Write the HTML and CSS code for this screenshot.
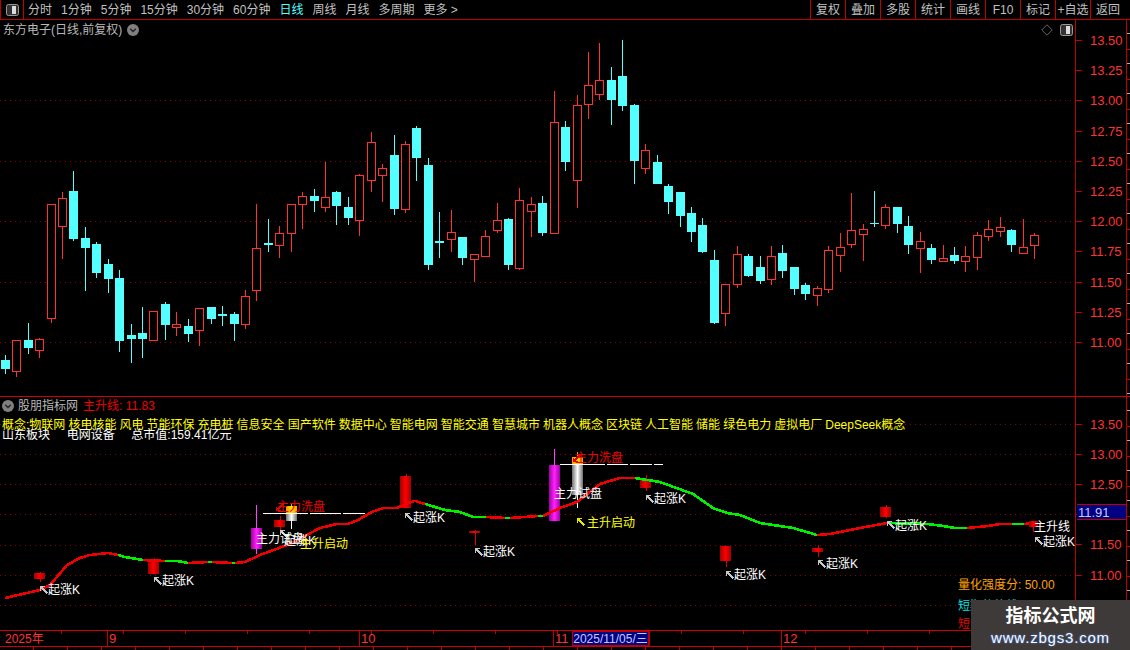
FILE: index.html
```html
<!DOCTYPE html>
<html lang="zh-CN">
<head>
<meta charset="utf-8">
<title>东方电子 日线</title>
<link rel="stylesheet" href="styles.css">
</head>
<body>
<div class="app">
  <svg class="defs" width="0" height="0" aria-hidden="true">
    <defs>
      <g id="ar"><path d="M0.5 0.5l7 7M0.5 0.5h4M0.5 0.5v4" fill="none" stroke-width="1.5"/></g>
      <linearGradient id="gr"><stop offset="0" stop-color="#a00000"/><stop offset=".5" stop-color="#ff0000"/><stop offset="1" stop-color="#a00000"/></linearGradient>
      <linearGradient id="gm"><stop offset="0" stop-color="#a000a0"/><stop offset=".5" stop-color="#ff20ff"/><stop offset="1" stop-color="#a000a0"/></linearGradient>
      <linearGradient id="gw"><stop offset="0" stop-color="#707070"/><stop offset=".5" stop-color="#ffffff"/><stop offset="1" stop-color="#707070"/></linearGradient>
      <linearGradient id="go"><stop offset="0" stop-color="#ff9800"/><stop offset=".5" stop-color="#ffe000"/><stop offset="1" stop-color="#ff9800"/></linearGradient>
    </defs>
  </svg>

  <header class="toolbar">
    <div class="tb-toggle">
      <svg width="13" height="12" viewBox="0 0 13 12"><rect x=".5" y=".5" width="12" height="11" rx="2" fill="#333" stroke="#999"/><rect x="6" y="2" width="4" height="8" fill="#ddd"/></svg>
    </div>
    <nav class="tb-periods">
      <span>分时</span><span>1分钟</span><span>5分钟</span><span>15分钟</span><span>30分钟</span><span>60分钟</span><span class="active">日线</span><span>周线</span><span>月线</span><span>多周期</span><span>更多 &gt;</span>
    </nav>
    <nav class="tb-actions">
      <span>复权</span><span>叠加</span><span>多股</span><span>统计</span><span>画线</span><span>F10</span><span>标记</span><span>+自选</span><span>返回</span>
    </nav>
  </header>

  <section class="panel panel-main">
    <div class="plot">
      <svg class="canvas" width="1075" height="376" viewBox="0 20 1075 376">
        <path class="grid" d="M0 100.5H1075M0 161.5H1075M0 221.5H1075M0 282.5H1075M0 342.5H1075"/>
        <path class="wick-c" d="M5.5 355V374M28.5 323V354M73.5 171V241M85.5 227V291M96.5 242V278M108.5 259V293M119.5 270V352M131.5 324V363M142.5 307V358M165.5 302V340M188.5 319V342M211.5 307V324M222.5 306V326M234.5 312V341M268.5 219V252M314.5 189V212M336.5 191V225M348.5 197V225M394.5 135V215M416.5 126V181M428.5 158V270M439.5 212V258M462.5 237V265M508.5 218V270M542.5 196V236M565.5 121V171M611.5 67V125M622.5 40V111M634.5 104V184M657.5 155V184M668.5 184V214M680.5 192V227M691.5 207V242M702.5 218V253M714.5 250V324M748.5 254V277M760.5 256V284M782.5 245V278M794.5 267V295M805.5 283V300M874.5 191V227M897.5 207V233M908.5 216V254M931.5 244V264M954.5 247V264M1011.5 229V252"/>
        <path class="body-c" d="M1 360h9v9h-9zM24 340h9v8h-9zM69 191h9v48h-9zM81 238h9v10h-9zM92 244h9v29h-9zM104 264h9v15h-9zM115 278h9v63h-9zM127 335h9v4h-9zM138 333h9v6h-9zM161 304h9v21h-9zM184 326h9v8h-9zM207 307h9v12h-9zM218 314h9v2h-9zM230 314h9v10h-9zM264 243h9v2h-9zM310 196h9v5h-9zM332 192h9v14h-9zM344 207h9v11h-9zM390 155h9v54h-9zM412 128h9v30h-9zM424 165h9v100h-9zM435 241h9v2h-9zM458 237h9v21h-9zM504 219h9v46h-9zM538 203h9v30h-9zM561 127h9v35h-9zM607 80h9v20h-9zM618 76h9v30h-9zM630 105h9v56h-9zM653 162h9v22h-9zM664 186h9v16h-9zM676 192h9v24h-9zM687 213h9v19h-9zM698 225h9v27h-9zM710 260h9v63h-9zM744 256h9v20h-9zM756 267h9v14h-9zM778 253h9v18h-9zM790 267h9v22h-9zM801 285h9v9h-9zM870 223h9v1h-9zM893 207h9v17h-9zM904 226h9v19h-9zM927 248h9v12h-9zM950 255h9v6h-9zM1007 230h9v15h-9z"/>
        <path class="wick-r" d="M16.5 371V377M39.5 338V339M39.5 350V358M51.5 318V323M62.5 192V198M62.5 226V259M176.5 312V324M176.5 327V336M199.5 330V346M245.5 290V296M245.5 324V329M256.5 204V248M256.5 290V301M279.5 226V233M279.5 245V258M291.5 233V252M302.5 192V196M302.5 204V229M325.5 162V197M325.5 207V212M359.5 174V175M359.5 220V236M371.5 132V142M371.5 180V192M382.5 164V168M382.5 175V202M405.5 141V144M405.5 209V213M451.5 210V232M451.5 239V252M474.5 259V282M485.5 230V236M497.5 203V220M497.5 230V233M519.5 188V200M519.5 268V270M531.5 197V204M531.5 211V237M554.5 91V122M577.5 95V105M577.5 180V208M588.5 52V85M588.5 104V119M599.5 43V80M599.5 94V100M645.5 144V150M645.5 168V174M725.5 313V326M737.5 246V254M737.5 284V288M771.5 246V256M771.5 279V285M817.5 286V288M817.5 295V306M828.5 246V250M828.5 289V293M840.5 233V247M840.5 255V272M851.5 193V230M851.5 244V248M863.5 224V229M863.5 234V261M885.5 204V207M885.5 225V229M920.5 232V241M920.5 248V273M943.5 245V258M965.5 246V256M965.5 261V272M977.5 232V235M977.5 257V270M988.5 220V229M988.5 236V241M1000.5 217V227M1000.5 231V237M1023.5 219V247M1034.5 233V235M1034.5 245V259"/>
        <path class="body-r" d="M12.5 340.5h8V371.5h-8zM35.5 339.5h8V350.5h-8zM47.5 204.5h8V318.5h-8zM58.5 198.5h8V226.5h-8zM149.5 311.5h8V340.5h-8zM172.5 324.5h8V327.5h-8zM195.5 308.5h8V330.5h-8zM241.5 296.5h8V324.5h-8zM252.5 248.5h8V290.5h-8zM275.5 233.5h8V245.5h-8zM287.5 204.5h8V233.5h-8zM298.5 196.5h8V204.5h-8zM321.5 197.5h8V207.5h-8zM355.5 175.5h8V220.5h-8zM367.5 142.5h8V180.5h-8zM378.5 168.5h8V175.5h-8zM401.5 144.5h8V209.5h-8zM447.5 232.5h8V239.5h-8zM470.5 254.5h8V259.5h-8zM481.5 236.5h8V256.5h-8zM493.5 220.5h8V230.5h-8zM515.5 200.5h8V268.5h-8zM527.5 204.5h8V211.5h-8zM550.5 122.5h8V233.5h-8zM573.5 105.5h8V180.5h-8zM584.5 85.5h8V104.5h-8zM595.5 80.5h8V94.5h-8zM641.5 150.5h8V168.5h-8zM721.5 284.5h8V313.5h-8zM733.5 254.5h8V284.5h-8zM767.5 256.5h8V279.5h-8zM813.5 288.5h8V295.5h-8zM824.5 250.5h8V289.5h-8zM836.5 247.5h8V255.5h-8zM847.5 230.5h8V244.5h-8zM859.5 229.5h8V234.5h-8zM881.5 207.5h8V225.5h-8zM916.5 241.5h8V248.5h-8zM939.5 258.5h8V261.5h-8zM961.5 256.5h8V261.5h-8zM973.5 235.5h8V257.5h-8zM984.5 229.5h8V236.5h-8zM996.5 227.5h8V231.5h-8zM1019.5 247.5h8V253.5h-8zM1030.5 235.5h8V245.5h-8z"/>
      </svg>
      <div class="chart-title">
        <span>东方电子(日线,前复权)</span>
        <svg width="12" height="12" viewBox="0 0 12 12"><circle cx="6" cy="6" r="6" fill="#808080"/><path d="M3.2 4.8L6 7.6l2.8-2.8" fill="none" stroke="#222" stroke-width="1.4"/></svg>
      </div>
      <div class="chart-tools">
        <svg width="12" height="12" viewBox="0 0 12 12"><path d="M6 .8L11.2 6 6 11.2.8 6z" fill="none" stroke="#666"/></svg>
        <svg width="13" height="12" viewBox="0 0 13 12"><rect x=".5" y=".5" width="12" height="11" rx="2" fill="#333" stroke="#999"/><rect x="6" y="2" width="4" height="8" fill="#ddd"/></svg>
      </div>
    </div>
    <aside class="axis axis-main">
      <div class="scale">
        <div class="tick">13.50</div><div class="tick">13.25</div><div class="tick">13.00</div><div class="tick">12.75</div><div class="tick">12.50</div><div class="tick">12.25</div><div class="tick">12.00</div><div class="tick">11.75</div><div class="tick">11.50</div><div class="tick">11.25</div><div class="tick">11.00</div>
      </div>
      <div class="minor"></div>
    </aside>
  </section>

  <section class="panel panel-sub">
    <div class="plot">
      <svg class="canvas" width="1075" height="233" viewBox="0 397 1075 233">
        <path class="grid" d="M0 424.5H1075M0 454.5H1075M0 484.5H1075M0 514.5H1075M0 545.5H1075M0 575.5H1075M0 605.5H1075"/>

        <path class="wick-s" d="M40 572V582M154 558V560M280 516V532M406 474V478M475 530V545M646 475V491M726 561V567M818 545V557M886 505V518M1033 521V532"/>
        <rect class="fill-r" x="34" y="573" width="11" height="6"/>
        <rect class="fill-r" x="148" y="559" width="11" height="15"/>
        <rect class="fill-r" x="274" y="520" width="11" height="7"/>
        <rect class="fill-r" x="400" y="476" width="11" height="32"/>
        <rect class="fill-r" x="469" y="531" width="11" height="2"/>
        <rect class="fill-r" x="640" y="479" width="11" height="9"/>
        <rect class="fill-r" x="720" y="546" width="11" height="15"/>
        <rect class="fill-r" x="812" y="548" width="11" height="4"/>
        <rect class="fill-r" x="880" y="507" width="11" height="10"/>

        <path class="wick-m" d="M256.500 505V554M554.500 449V521"/>
        <rect class="fill-m" x="251" y="528" width="11" height="21"/>
        <rect class="fill-m" x="549" y="465" width="11" height="56"/>

        <path class="wick-w" d="M291.500 521V529M577.500 495V508"/>
        <path class="wick-o" d="M291.500 503V506M577.500 452V457"/>
        <rect class="fill-w" x="286" y="513" width="11" height="8"/>
        <rect class="fill-o" x="286" y="506" width="11" height="7"/>
        <rect class="fill-w" x="572" y="464" width="11" height="31"/>
        <rect class="fill-o" x="572" y="457" width="11" height="7"/>

        <path class="dash" d="M263 513.500H308M310 513.500H341M343 513.500H365M560 464.500H605M607 464.500H628M630 464.500H652M654 464.500H663"/>

        <path class="line-r" d="M5 598L40 590 50 585 62 571 67 565 80 558 90 555 108 553 118 555M143 560L165 561M188 563L208 562M212 562L232 563M235 563L245 562 260 555 290 544 320 528 337 524 348 524 358 520 372 512 383 508 397 508 408 503 415 501 425 504M486 517L505 518M510 518L538 516M543 516L560 508 577 502 600 484 620 478 635 478M817 535L830 534 860 528 887 523M967 528L988 526 1000 524 1012 524M1024 524L1033 523"/>
        <path class="line-g" d="M118 555L125 557 143 560M165 561L177 561 188 563M208 562L212 562M232 563L235 563M425 504L445 510 460 512 473 517 486 517M505 518L510 518M538 516L543 516M635 478L660 482 693 494 713 508 727 513 740 515 760 523 793 528 817 535M887 523L927 524 943 526 955 528 967 528M1012 524L1024 524"/>
        <rect class="fill-r" x="1029" y="521" width="9" height="6"/>

        <use href="#ar" class="ar-w" x="40" y="586"/>
        <use href="#ar" class="ar-w" x="154" y="577"/>
        <use href="#ar" class="ar-w" x="280" y="530"/>
        <use href="#ar" class="ar-w" x="405" y="513"/>
        <use href="#ar" class="ar-w" x="475" y="548"/>
        <use href="#ar" class="ar-w" x="646" y="495"/>
        <use href="#ar" class="ar-w" x="726" y="571"/>
        <use href="#ar" class="ar-w" x="818" y="560"/>
        <use href="#ar" class="ar-w" x="887" y="521"/>
        <use href="#ar" class="ar-w" x="1035" y="537"/>
        <use href="#ar" class="ar-r" x="268" y="511" transform="rotate(270 272 507)"/>
        <use href="#ar" class="ar-r" x="565" y="462" transform="rotate(270 569 458)"/>
        <use href="#ar" class="ar-y" x="577" y="518"/>

        <text class="lb" x="48" y="593.500">起涨K</text>
        <text class="lb" x="162" y="584.500">起涨K</text>
        <text class="lb" x="284" y="544.500">起涨K</text>
        <text class="lb" x="256" y="542.500">主力试盘</text>
        <text class="lb lb-y" x="300" y="548">主升启动</text>
        <text class="lb lb-r" x="277" y="510.500">主力洗盘</text>
        <text class="lb" x="413" y="521.500">起涨K</text>
        <text class="lb" x="483" y="555.500">起涨K</text>
        <text class="lb" x="554" y="497.500">主力试盘</text>
        <text class="lb lb-r" x="575" y="461.500">主力洗盘</text>
        <text class="lb lb-y" x="587" y="526.500">主升启动</text>
        <text class="lb" x="654" y="502.500">起涨K</text>
        <text class="lb" x="734" y="578.500">起涨K</text>
        <text class="lb" x="826" y="567.500">起涨K</text>
        <text class="lb" x="895" y="529.500">起涨K</text>
        <text class="lb" x="1034" y="530.500">主升线</text>
        <text class="lb" x="1043" y="545.500">起涨K</text>
        <text class="lb lb-o" x="958" y="588.500">量化强度分: 50.00</text>
        <text class="lb lb-c" x="958" y="609.500">短期趋势线</text>
        <text class="lb lb-r" x="958" y="627.500">短线资金</text>
      </svg>
      <div class="sub-head">
        <div class="sub-title">
          <svg width="12" height="12" viewBox="0 0 12 12"><circle cx="6" cy="6" r="6" fill="#808080"/><path d="M3.2 4.8L6 7.6l2.8-2.8" fill="none" stroke="#222" stroke-width="1.4"/></svg>
          <span class="sub-name">股朋指标网</span>
          <span class="sub-value">主升线: 11.83</span>
        </div>
        <div class="concepts">概念:物联网 核电核能 风电 节能环保 充电桩 信息安全 国产软件 数据中心 智能电网 智能交通 智慧城市 机器人概念 区块链 人工智能 储能 绿色电力 虚拟电厂 DeepSeek概念</div>
        <div class="profile">山东板块     电网设备     总市值:159.41亿元</div>
      </div>
    </div>
    <aside class="axis axis-sub">
      <div class="scale">
        <div class="tick">13.50</div><div class="tick">13.00</div><div class="tick">12.50</div><div class="tick">12.00</div><div class="tick">11.50</div><div class="tick">11.00</div>
      </div>
      <div class="minor"></div>
      <div class="price-tag">11.91</div>
    </aside>
  </section>

  <footer class="dates">
    <span class="date date-y">2025年</span>
    <span class="date date-9">9</span>
    <span class="date date-10">10</span>
    <span class="date date-11">11</span>
    <span class="date-cursor">2025/11/05/三</span>
    <span class="date date-gap"></span>
    <span class="date date-12">12</span>
  </footer>
  <div class="strip"></div>

  <div class="watermark">
    <strong>指标公式网</strong>
    <span>www.zbgs3.com</span>
  </div>
</div>
</body>
</html>
```

FILE: styles.css
```css
* { box-sizing: border-box; }
html, body { margin: 0; background: #000; }
body { font: 12px/1 "Liberation Sans", "Noto Sans CJK SC", sans-serif; color: #c0c0c0; }
.app { position: relative; width: 1130px; height: 650px; overflow: hidden; display: flex; flex-direction: column; background: #000; }
.defs { position: absolute; }

.toolbar { height: 20px; flex: none; display: flex; align-items: stretch; border-bottom: 1px solid #c00000; }
.tb-toggle { width: 24px; display: flex; align-items: center; justify-content: center; border-left: 1px solid #c00000; border-right: 1px solid #c00000; }
.tb-periods { display: flex; align-items: center; gap: 9px; padding-left: 4px; }
.tb-periods .active { color: #54ffff; }
.tb-actions { margin-left: auto; padding-right: 5px; display: flex; }
.tb-actions span { width: 35px; display: flex; align-items: center; justify-content: center; border-left: 1px solid #c00000; white-space: nowrap; }

.panel { display: flex; flex: none; }
.panel-main { height: 377px; border-bottom: 1px solid #d00000; }
.panel-sub { height: 234px; border-bottom: 1px solid #d00000; }
.plot { position: relative; width: 1075px; flex: none; }
.canvas { display: block; shape-rendering: crispEdges; }

.grid { stroke: #8c0000; stroke-width: 1; stroke-dasharray: 1 4; fill: none; }
.wick-c { stroke: #54ffff; fill: none; }
.body-c { fill: #54ffff; }
.wick-r { stroke: #ff3232; fill: none; }
.body-r { stroke: #ff3232; fill: #000; }
.wick-s { stroke: #e00000; fill: none; }
.wick-m { stroke: #ff40ff; fill: none; }
.wick-w { stroke: #fff; fill: none; }
.wick-o { stroke: #ffa000; fill: none; }
.fill-r { fill: url(#gr); }
.fill-m { fill: url(#gm); }
.fill-w { fill: url(#gw); }
.fill-o { fill: url(#go); }
.dash { stroke: #fff; fill: none; }
.line-r { stroke: #f00000; stroke-width: 2.6; fill: none; }
.line-g { stroke: #00f000; stroke-width: 2.6; fill: none; }
.ar-w { stroke: #c8c8c8; }
.ar-r { stroke: #e00000; }
.ar-y { stroke: #e8e800; }

.lb { font: 12px "Liberation Sans", "Noto Sans CJK SC", sans-serif; fill: #fff; shape-rendering: auto; }
.lb-y { fill: #ffff00; }
.lb-r { fill: #f00000; }
.lb-o { fill: #ffa000; }
.lb-c { fill: #00e8e8; }

.chart-title { position: absolute; left: 3px; top: 3px; display: flex; align-items: center; gap: 5px; height: 13px; color: #b8b8b8; white-space: nowrap; }
.chart-tools { position: absolute; right: 2px; top: 4px; display: flex; align-items: center; gap: 7px; }

.sub-head { position: absolute; left: 0; top: 0; right: 0; }
.sub-title { display: flex; align-items: center; height: 17px; padding-left: 2px; white-space: nowrap; }
.sub-name { margin-left: 4px; color: #b8b8b8; }
.sub-value { margin-left: 5px; color: #f00000; }
.concepts { margin-top: 5px; height: 12px; padding-left: 2px; color: #ffff00; white-space: pre; word-spacing: -0.28px; }
.profile { margin-top: -2px; height: 12px; padding-left: 2px; color: #fff; white-space: pre; }

.axis { position: relative; flex: 1; display: flex; border-left: 1px solid #c00000; background-repeat: no-repeat; }
.scale { flex: 1; border-right: 1px solid #c00000; }
.axis-main .scale { padding-top: 5.500px; }
.axis-sub .scale { padding-top: 12px; }
.tick { height: 30.2px; display: flex; align-items: center; gap: 8px; color: #ff3232; font-size: 13px; white-space: nowrap; }
.tick::before { content: ""; width: 6px; height: 1px; background: #c00000; flex: none; }
.minor { width: 3px; flex: none; background: repeating-linear-gradient(to bottom, #000 0 13px, #b0b0b0 13px 14px, #000 14px 29px, #c00000 29px 30px); }
.price-tag { position: absolute; left: 1px; top: 107px; width: 49px; height: 16px; display: flex; align-items: center; padding-left: 1px; background: #000080; border: solid #c00000; border-width: 1px 0; color: #c8c8ff; font-size: 13px; }

.dates { height: 16px; flex: none; display: flex; width: 1075px; border-bottom: 1px solid #d00000; color: #ff3232; font-size: 13px; background: repeating-linear-gradient(to right, #000 0 61px, #c00000 61px 62px) 0 0 / 100% 3px no-repeat; }
.date { display: flex; align-items: center; padding-left: 1px; border-left: 1px solid #c00000; white-space: nowrap; background: transparent; }
.date-y { width: 107px; padding-left: 5px; border-left: 0; font-size: 12px; }
.date-9 { width: 252px; }
.date-10 { width: 194px; }
.date-11 { width: 19px; }
.date-gap { width: 132px; }
.date-12 { flex: 1; }
.date-cursor { width: 77px; display: flex; align-items: center; justify-content: center; background: #000080; border: 1px solid #c00000; color: #c8c8ff; font-size: 12px; white-space: nowrap; }
.strip { flex: 1; background: repeating-linear-gradient(to right, #000 0 33px, #c00000 33px 34px); }

.watermark { position: absolute; right: 0; bottom: 0; width: 159px; height: 50px; display: flex; flex-direction: column; align-items: center; justify-content: center; gap: 2px; background: #3f3a3a; color: #fff; }
.watermark strong { font-size: 18px; line-height: 22px; }
.watermark span { font-size: 15px; line-height: 17px; letter-spacing: .8px; color: #f4f8ff; text-shadow: 0 0 2px #4a8cff; }
```
